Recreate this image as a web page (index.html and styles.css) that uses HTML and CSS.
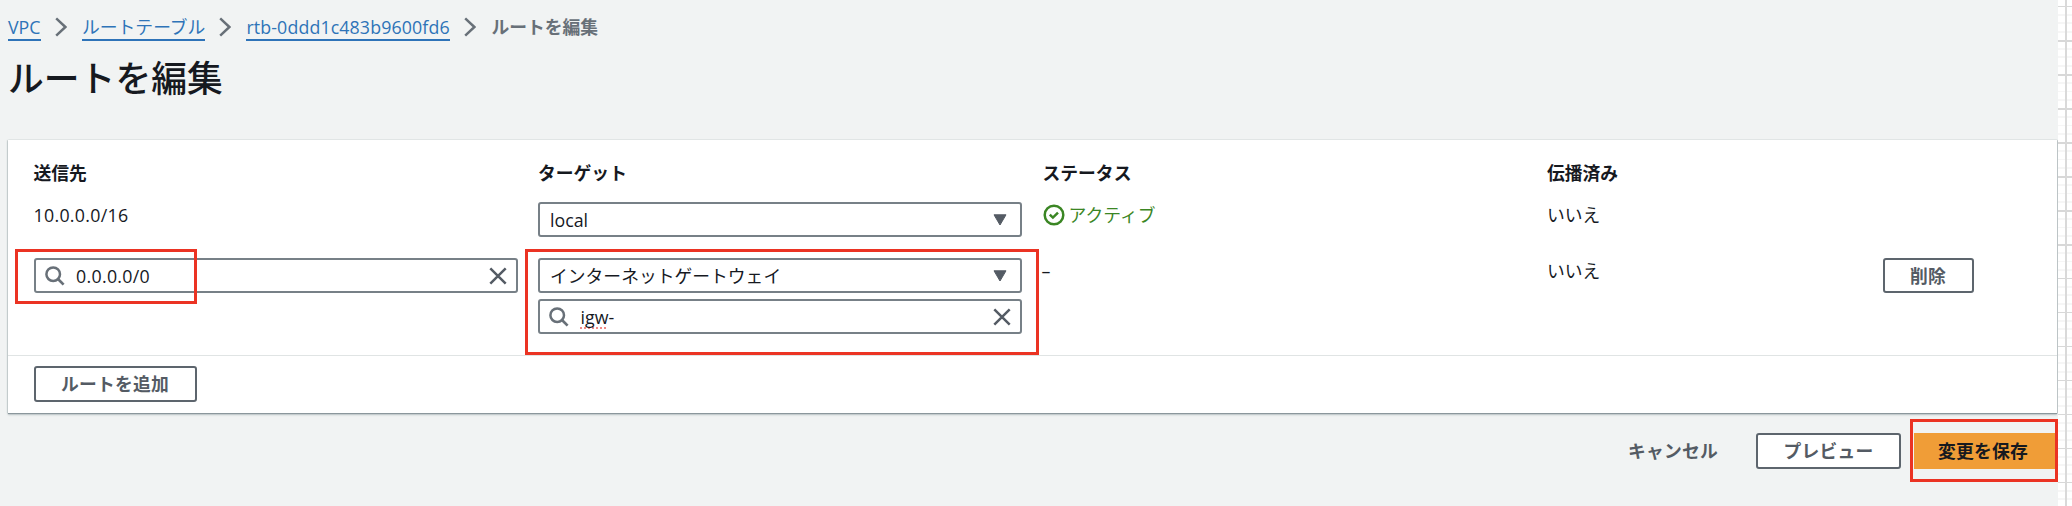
FILE: index.html
```html
<!DOCTYPE html>
<html lang="ja">
<head>
<meta charset="utf-8">
<title>ルートを編集</title>
<link rel="stylesheet" href="styles.css">
</head>
<body>
<svg class="defs" width="0" height="0">
  <symbol id="chevron" viewBox="0 0 12 20"><path d="M1.2 1.4 10.4 10 1.2 18.6" fill="none" stroke="currentColor" stroke-width="2.5"/></symbol>
  <symbol id="search" viewBox="0 0 20 20"><circle cx="8.2" cy="8.2" r="6.8" fill="none" stroke="currentColor" stroke-width="2.5"/><path d="M13 13 18.6 18.6" fill="none" stroke="currentColor" stroke-width="2.7"/></symbol>
  <symbol id="close" viewBox="0 0 18 18"><path d="M1.3 1.3 16.7 16.7M16.7 1.3 1.3 16.7" fill="none" stroke="currentColor" stroke-width="2.5"/></symbol>
  <symbol id="caret" viewBox="0 0 14 12"><path d="M1 .8H13L7 11Z" fill="currentColor" stroke="currentColor" stroke-linejoin="round"/></symbol>
</svg>
<main class="page">
  <nav class="breadcrumbs">
    <a class="crumb crumb-vpc">VPC</a>
    <svg class="chevron"><use href="#chevron"/></svg>
    <a class="crumb">ルートテーブル</a>
    <svg class="chevron"><use href="#chevron"/></svg>
    <a class="crumb crumb-id">rtb-0ddd1c483b9600fd6</a>
    <svg class="chevron"><use href="#chevron"/></svg>
    <span class="crumb-current">ルートを編集</span>
  </nav>
  <h1 class="title">ルートを編集</h1>
  <section class="card">
    <div class="routes">
      <div class="row head">
        <div>送信先</div><div>ターゲット</div><div>ステータス</div><div>伝播済み</div>
      </div>
      <div class="row row-local">
        <div class="value"><span class="cidr">10.0.0.0/16</span></div>
        <div class="field"><span class="local">local</span><svg class="caret"><use href="#caret"/></svg></div>
        <div class="value status"><svg class="check" viewBox="0 0 22 22"><circle cx="11" cy="11" r="9.3"/><path d="M6.8 10.6 9.9 13.6 15 8.6"/></svg>アクティブ</div>
        <div class="value">いいえ</div>
      </div>
      <div class="row row-new">
        <div class="field search-field marked-parent"><svg class="search"><use href="#search"/></svg><span class="typed cidr">0.0.0.0/0</span><svg class="close"><use href="#close"/></svg><i class="mark mark-dest"></i></div>
        <div class="stack marked-parent">
          <div class="field"><span>インターネットゲートウェイ</span><svg class="caret"><use href="#caret"/></svg></div>
          <div class="field search-field"><svg class="search"><use href="#search"/></svg><span class="typed latin"><span class="misspelled">igw</span>-</span><svg class="close"><use href="#close"/></svg></div>
          <i class="mark mark-target"></i>
        </div>
        <div class="value dash">–</div>
        <div class="value">いいえ</div>
        <button class="button delete">削除</button>
      </div>
    </div>
    <div class="card-footer"><button class="button add">ルートを追加</button></div>
  </section>
  <footer class="actions">
    <button class="button cancel">キャンセル</button>
    <button class="button preview">プレビュー</button>
    <div class="marked-parent"><button class="button save">変更を保存</button><i class="mark mark-save"></i></div>
  </footer>
</main>
<aside class="grid-paper"></aside>
</body>
</html>
```
FILE: styles.css
```css
* { box-sizing: border-box; }
body {
  margin: 0;
  display: flex;
  width: 2072px;
  height: 506px;
  overflow: hidden;
  background: #fff;
  color: #16191f;
  font: 17.8px/26px "Open Sans", "Noto Sans CJK JP", sans-serif;
}
svg { display: block; flex: none; }
.defs { position: absolute; }
.page { width: 2058px; height: 506px; background: #f1f3f3; }

.breadcrumbs { display: flex; align-items: center; height: 54px; padding-left: 8px; }
.crumb { height: 27px; color: #2e73b8; border-bottom: 2px solid #2e73b8; line-height: 26px; white-space: nowrap; }
.crumb-vpc { width: 33px; font-weight: 500; }
.crumb-id { width: 204px; font-weight: 500; letter-spacing: .12px; }
.chevron { width: 12px; height: 20px; margin: 0 15px 0 14px; color: #687078; }
.crumb-current { color: #687078; font-weight: 700; }
.title { margin: 0 0 0 8px; height: 86px; font-size: 35.8px; line-height: 49px; font-weight: 500; }

.card {
  width: 2049px;
  height: 273px;
  margin-left: 8px;
  background: #fff;
  box-shadow: 0 1px 1px #8b979c, 0 2px 2px #c4cccd, 1px 0 1px #c9cfd0, -1px 0 1px #d5dbdb, 0 -1px 0 #eaeded;
}
.routes { height: 216px; padding: 20px 25.5px 0; border-bottom: 1px solid #e0e4e4; }
.row { display: grid; grid-template-columns: 484px 484px 484px 315px auto; column-gap: 20.5px; align-items: start; justify-content: start; }
.head { height: 42px; font-weight: 700; }
.row-local { height: 56px; }
.value { height: 28px; white-space: nowrap; }
.cidr { font-weight: 500; letter-spacing: .3px; }
.local, .latin { font-weight: 500; }
.status { display: flex; align-items: center; gap: 4px; height: 26px; color: #3b8624; }
.check { width: 22px; height: 22px; fill: none; stroke: currentColor; stroke-width: 2.5; }
.dash { margin-left: -1px; font-weight: 500; }

.field {
  display: flex;
  align-items: center;
  justify-content: space-between;
  height: 35px;
  padding: 0 13px 0 10px;
  border: 2px solid #778087;
  border-radius: 3px;
  background: #fff;
  white-space: nowrap;
}
.search-field { justify-content: flex-start; padding: 0 9px; }
.caret { width: 14px; height: 12px; color: #545b64; }
.search { width: 20px; height: 20px; color: #687078; }
.close { width: 18px; height: 18px; margin-left: auto; color: #545b64; }
.typed { margin-left: 11.5px; }
.stack { display: grid; gap: 6px; }
.misspelled { text-decoration: underline dotted #f08a85 2px; text-underline-offset: 4px; text-decoration-skip-ink: none; }

.button {
  height: 36px;
  padding: 0;
  border: 2px solid #5d656d;
  border-radius: 3px;
  background: #fff;
  color: #545b64;
  font: inherit;
  font-weight: 700;
  letter-spacing: .2px;
  line-height: 30px;
  white-space: nowrap;
}
.delete { width: 91px; height: 35px; }
.add { width: 163px; }
.card-footer { padding: 10px 25.5px; }
.actions { display: flex; justify-content: flex-end; padding: 20px 3px 0 0; }
.cancel { width: 90px; margin-right: 40px; border-color: transparent; background: none; }
.preview { width: 145px; margin-right: 13px; }
.save { display: block; width: 141px; padding-right: 3px; border-color: #f09d37; border-radius: 0; background: #f09d37; color: #16191f; }

.marked-parent { position: relative; }
.mark { position: absolute; border: 3px solid #eb3323; pointer-events: none; }
.mark-dest { left: -20.5px; top: -11px; width: 182px; height: 55px; }
.mark-target { left: -13.5px; top: -9px; width: 514px; height: 106px; }
.mark-save { left: -4px; top: -14px; width: 148px; height: 63px; }

.grid-paper {
  width: 14px;
  height: 506px;
  background:
    linear-gradient(90deg, transparent 7px, #d9d9d9 7px 9px, transparent 9px),
    repeating-linear-gradient(180deg, transparent 0 6px, #d8d8d8 6px 7.5px, transparent 7.5px 14px, #f6f6f6 14px 16px, transparent 16px 22.5px, #f6f6f6 22.5px 24.5px, transparent 24.5px 31px, #f6f6f6 31px 33px, transparent 33px 34px),
    #fff;
}
```
